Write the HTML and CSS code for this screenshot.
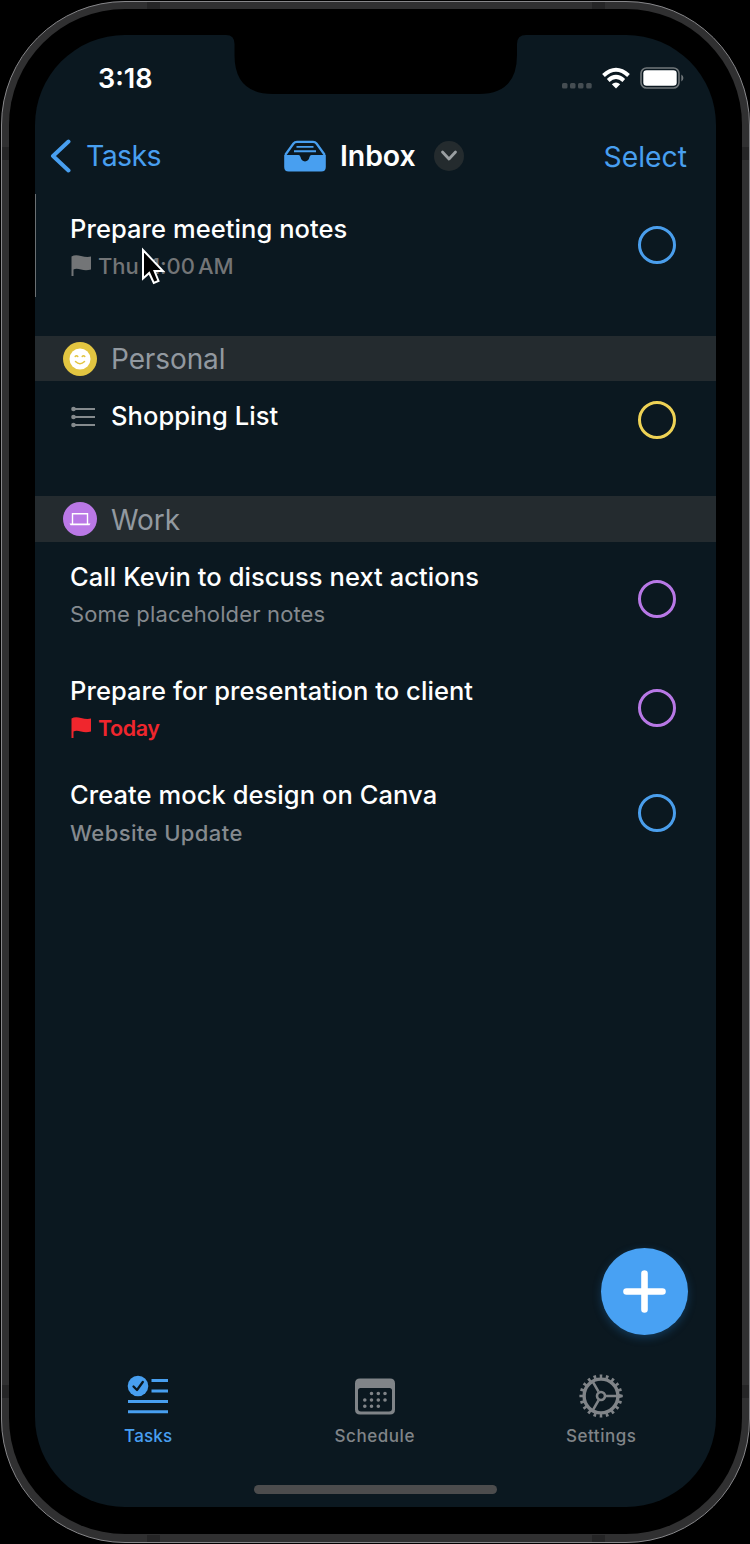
FILE: index.html
```html
<!DOCTYPE html>
<html lang="en">
<head>
<meta charset="utf-8">
<title>Inbox</title>
<link rel="stylesheet" href="styles.css">
</head>
<body>
<div class="phone">
  <i class="band band-t1"></i><i class="band band-t2"></i><i class="band band-b1"></i><i class="band band-b2"></i>
  <i class="band band-l1"></i><i class="band band-l2"></i><i class="band band-r1"></i><i class="band band-r2"></i>
  <div class="bezel">
    <main class="screen">
      <svg class="notch" width="300" height="60" viewBox="0 0 300 60"><path d="M0 0H300Q291 0 291 9V20Q291 59 253 59H47Q8.500 59 8.500 20V9Q8.500 0 0 0Z" fill="#000"/></svg>
      <header class="status">
        <span class="time">3:18</span>
        <span class="signals">
          <svg width="32" height="8" viewBox="0 0 32 8" fill="#454d52"><rect x="1" y="2" width="5.500" height="5.500" rx="1.500"/><rect x="9" y="2" width="5.500" height="5.500" rx="1.500"/><rect x="17" y="2" width="5.500" height="5.500" rx="1.500"/><rect x="25.200" y="2" width="5.500" height="5.500" rx="1.500"/></svg>
          <svg class="wifi" width="30" height="22" viewBox="0 0 30 22" fill="none" stroke="#fff" stroke-width="4"><path d="M2.500 8.500Q15-3 27.500 8.500"/><path d="M7.200 13.400Q15 6.500 22.800 13.400"/><path d="M15 21.500L10.800 17.200Q15 13.600 19.200 17.200Z" fill="#fff" stroke="none"/></svg>
          <svg class="battery" width="44" height="22" viewBox="0 0 44 22"><rect x="1" y="1" width="38" height="20" rx="5.500" fill="none" stroke="#71777a" stroke-width="1.600"/><rect x="3.300" y="3.300" width="33.400" height="15.400" rx="3.300" fill="#fff"/><path d="M41.300 7.500Q43.400 8.500 43.400 11T41.300 14.500Z" fill="#71777a"/></svg>
        </span>
      </header>
      <nav class="navbar">
        <a class="back"><svg width="22" height="36" viewBox="0 0 22 36" fill="none" stroke="currentColor" stroke-width="4" stroke-linecap="round" stroke-linejoin="round"><path d="M19.500 3.500L4 18L19.500 32.500"/></svg><span>Tasks</span></a>
        <div class="heading">
          <svg width="44" height="32" viewBox="0 0 44 32"><path d="M2.200 15L10.500 3.500Q11.800 1.800 14 1.800H30Q32.200 1.800 33.500 3.500L41.800 15" fill="none" stroke="currentColor" stroke-width="2.200"/><path d="M1.200 15H15.500Q17 15 17.500 17Q18.500 21.400 22 21.400T26.500 17Q27 15 28.500 15H42.800V27Q42.800 31.500 38.300 31.500H5.700Q1.200 31.500 1.200 27Z" fill="currentColor"/><path d="M13.500 6.900H30.500M11 11.300H33" stroke="currentColor" stroke-width="1.900"/></svg>
          <h1>Inbox</h1>
          <span class="more"><svg width="18" height="12" viewBox="0 0 18 12" fill="none" stroke="currentColor" stroke-width="2.800" stroke-linecap="round" stroke-linejoin="round"><path d="M2.500 2L9 9L15.500 2"/></svg></span>
        </div>
        <a class="select">Select</a>
      </nav>
      <section class="tasks">
        <article class="task task-first">
          <div><h2>Prepare meeting notes</h2>
          <p class="date"><svg width="22" height="24" viewBox="0 0 22 24"><path d="M1.500 2.500Q5 .5 11 2T21 2.500V15.500Q16 17 11 15.500T3.500 15.500V22H1.500Z" fill="currentColor"/></svg><span class="when">Thu 11:00 AM</span></p></div>
          <i class="check blue"></i>
        </article>
        <h3 class="group personal"><svg width="34" height="34" viewBox="0 0 34 34"><circle cx="17" cy="17" r="17" fill="#e2c541"/><circle cx="17" cy="17" r="10.500" fill="#fff"/><g fill="none" stroke="#e2c541" stroke-width="1.500" stroke-linecap="round"><path d="M12.200 14.500Q13.500 12.800 14.800 14.500M19.200 14.500Q20.500 12.800 21.800 14.500M12.500 19.500Q17 24 21.500 19.500"/></g></svg><span>Personal</span></h3>
        <article class="task task-shopping">
          <div class="with-icon"><svg width="26" height="24" viewBox="0 0 26 24"><g fill="#858a8d"><circle cx="3.500" cy="5" r="2.300"/><circle cx="3.500" cy="13" r="2.300"/><circle cx="3.500" cy="21" r="2.300"/><path d="M3 4H25V6H3ZM3 12H25V14H3ZM3 20H25V22H3Z"/></g></svg><h2>Shopping List</h2></div>
          <i class="check yellow"></i>
        </article>
        <h3 class="group work"><svg width="34" height="34" viewBox="0 0 34 34"><circle cx="17" cy="17" r="17" fill="#ba78e6"/><path d="M9.500 22V11.800H24.500V22" fill="none" stroke="#fff" stroke-width="1.400"/><path d="M6.500 21.500H27.500L26.500 23.300H7.500Z" fill="#fff"/></svg><span>Work</span></h3>
        <article class="task task-call">
          <div><h2>Call Kevin to discuss next actions</h2><p class="notes">Some placeholder notes</p></div>
          <i class="check purple"></i>
        </article>
        <article class="task task-client">
          <div><h2>Prepare for presentation to client</h2>
          <p class="date today"><svg width="22" height="24" viewBox="0 0 22 24"><path d="M1.500 2.500Q5 .5 11 2T21 2.500V15.500Q16 17 11 15.500T3.500 15.500V22H1.500Z" fill="currentColor"/></svg><span>Today</span></p></div>
          <i class="check purple"></i>
        </article>
        <article class="task task-canva">
          <div><h2>Create mock design on Canva</h2><p class="project">Website Update</p></div>
          <i class="check blue"></i>
        </article>
      </section>
      <button class="add" aria-label="Add task"><svg width="44" height="44" viewBox="0 0 44 44" stroke="#fff" stroke-width="6.600" stroke-linecap="round"><path d="M21.500 3.500V39.500M3.500 21.500H39.500"/></svg></button>
      <footer class="tabs">
        <a class="tab active"><svg width="44" height="44" viewBox="0 0 44 44"><circle cx="12" cy="12" r="10.300" fill="currentColor"/><path d="M7.500 12.500L11 16L16.800 8" fill="none" stroke="#0b1820" stroke-width="2.300" stroke-linecap="round" stroke-linejoin="round"/><path d="M25.500 6.500H42M25.500 17H42M2 27.500H42M2 37.800H42" stroke="currentColor" stroke-width="2.900"/></svg><span class="label-tasks">Tasks</span></a>
        <a class="tab"><svg width="44" height="44" viewBox="0 0 44 44"><path fill-rule="evenodd" d="M7 4.500H37Q42 4.500 42 9.500V35.500Q42 40.500 37 40.500H7Q2 40.500 2 35.500V9.500Q2 4.500 7 4.500ZM7.500 14Q5 14 5 16.500V34.500Q5 37.500 8 37.500H36Q39 37.500 39 34.500V16.500Q39 14 36.500 14Z" fill="currentColor"/><path d="M18.500 19.500h.01M25.300 19.500h.01M32 19.500h.01M11.800 26h.01M18.500 26h.01M25.300 26h.01M32 26h.01M11.800 32.300h.01M18.500 32.300h.01M25.300 32.300h.01" stroke="currentColor" stroke-width="3.600" stroke-linecap="round"/></svg><span>Schedule</span></a>
        <a class="tab"><svg width="44" height="44" viewBox="-22 -22 44 44" fill="none" stroke="currentColor"><circle r="16.900" stroke-width="3.400"/><path d="M21.500-1.100V1.100L18 2.200V-2.200Z" id="tooth" fill="currentColor" stroke="none"/><circle r="19.800" stroke-width="3.600" pathLength="200" stroke-dasharray="4.200 5.800" stroke-dashoffset="2.100"/><circle r="4" stroke-width="2.600"/><path d="M5 0H16M-2.500 4.300L-8 13.900M-2.500-4.300L-8-13.900" stroke-width="2.600"/></svg><span>Settings</span></a>
      </footer>
      <i class="home"></i>
      <svg class="cursor" width="24" height="38" viewBox="0 0 24 38"><path d="M2 3V31.500L8.200 26L12.800 36L17.500 34L13.500 24H22Z" fill="#000" stroke="#fff" stroke-width="2"/></svg>
      <i class="edge"></i>
    </main>
  </div>
</div>
</body>
</html>
```

FILE: styles.css
```css
* { box-sizing: border-box; margin: 0; padding: 0; }
body { width: 750px; height: 1544px; overflow: hidden; background: #000; font-family: Inter, "Liberation Sans", sans-serif; padding: 1px 0 1px 1px; }
svg { display: block; flex: none; }
.phone { position: relative; width: 749px; height: 1542px; border: 1.5px solid #87878a; border-radius: 124px; background: #303031; padding: 7px; }
.bezel { width: 733px; height: 1525px; border-radius: 116px; background: #000; padding: 26px 0 0 26px; }
.screen { position: relative; display: flex; flex-direction: column; width: 681px; height: 1472px; border-radius: 90px; background: #0b1820; color: #fff; }
.band { position: absolute; background: #252526; }
.band-t1, .band-t2 { top: 0; width: 13px; height: 7px; }
.band-b1, .band-b2 { bottom: 0; width: 13px; height: 7px; }
.band-t1, .band-b1 { left: 145px; }
.band-t2, .band-b2 { left: 590px; }
.band-l1, .band-l2 { left: 0; width: 7px; height: 13px; }
.band-r1, .band-r2 { right: 0; width: 7px; height: 13px; }
.band-l1, .band-r1 { top: 145px; }
.band-l2, .band-r2 { top: 1383px; }
.notch { position: absolute; left: 191px; top: 0; }
.status { display: flex; justify-content: space-between; height: 75px; padding: 24px 32px 0 63px; }
.time { font-size: 27px; line-height: 39px; font-weight: 600; }
.signals { display: flex; align-items: center; height: 38px; }
.signals svg:first-child { margin-top: 13px; }
.wifi { margin-left: 8px; }
.battery { margin-left: 9px; }
.navbar { display: grid; grid-template-columns: 248px 1fr auto; align-items: center; height: 84px; padding: 7px 29px 0 14px; }
.back, .select, .heading svg { color: #489ff0; }
.back { display: flex; align-items: center; gap: 15px; font-size: 28.5px; letter-spacing: -.6px; }
.heading { display: flex; align-items: center; margin-left: -14px; }
h1 { margin-left: 13px; font-size: 28.5px; line-height: 36px; font-weight: 600; letter-spacing: -.1px; }
.more { display: grid; place-items: center; width: 30px; height: 30px; margin-left: 18px; border-radius: 50%; background: #242b2e; }
.heading .more svg { color: #9a9fa2; }
.select { padding-top: 2px; font-size: 28.3px; }
.tasks { flex: 1; }
.task { display: flex; justify-content: space-between; padding: 17px 40px 0 35px; }
h2 { font-size: 25.5px; line-height: 36px; font-weight: 500; letter-spacing: .07px; white-space: nowrap; }
.task p { font-size: 22px; line-height: 38px; color: #858a8f; white-space: nowrap; }
.task .date { display: flex; align-items: center; gap: 6px; height: 37px; font-weight: 500; color: #737577; }
.when { letter-spacing: -.1px; word-spacing: -2.4px; }
.task .today { height: 38px; color: #f0262d; font-size: 21.5px; font-weight: 600; letter-spacing: -.45px; }
.task .notes { line-height: 39px; letter-spacing: .15px; }
.task .project { line-height: 40px; font-weight: 550; letter-spacing: .4px; }
.check { flex: none; width: 38px; height: 38px; border: 3px solid; border-radius: 50%; }
.blue { color: #4a9eec; }
.yellow { color: #eed255; }
.purple { color: #b878e6; }
.task-first { height: 142px; }
.task-first .check { margin-top: 15px; }
.task-shopping { height: 115px; }
.task-shopping .check { margin-top: 3px; }
.with-icon { display: flex; gap: 15px; height: 36px; align-items: center; }
.task-call { height: 114px; }
.task-call .check { margin-top: 21px; }
.task-client { height: 104px; }
.task-client .check { margin-top: 16px; }
.task-canva .check { margin-top: 17px; }
.group { display: flex; align-items: center; gap: 14px; height: 45px; padding-left: 28px; background: #242b2f; color: #9299a0; font-size: 28px; font-weight: 400; }
.group span { padding-top: 1px; letter-spacing: -.1px; }
.work { height: 46px; }
.add { position: absolute; left: 566px; top: 1213px; display: grid; place-items: center; width: 87px; height: 87px; border: 0; border-radius: 50%; background: #48a1f3; box-shadow: 0 3px 8px rgba(30, 105, 170, .4); }
.tabs { display: grid; grid-template-columns: repeat(3, 226.500px); height: 116px; padding-top: 2px; }
.tab { display: flex; flex-direction: column; align-items: center; gap: 6px; font-size: 17px; line-height: 24px; font-weight: 500; letter-spacing: .55px; color: #808488; }
.active { color: #489ff0; }
.label-tasks { letter-spacing: .2px; }
.home { width: 243px; height: 9px; margin: 0 0 13px 219px; border-radius: 5px; background: #4c4c4d; }
.tabs { margin-top: 5px; height: 113px; }
.cursor { position: absolute; left: 106px; top: 212px; }
.edge { position: absolute; left: 0; top: 159px; width: 1px; height: 103px; background: #6b7073; }
```
